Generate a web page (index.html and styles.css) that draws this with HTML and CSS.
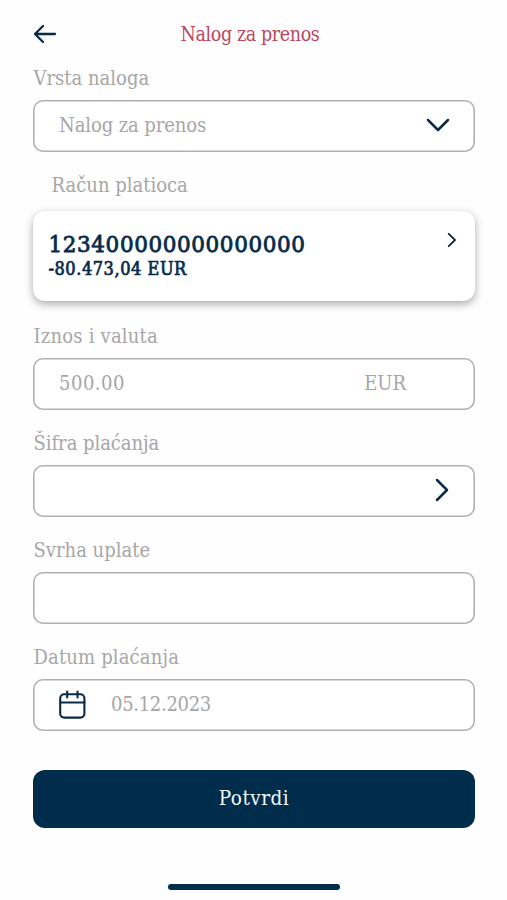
FILE: index.html
```html
<!DOCTYPE html>
<html lang="sr-Latn">
<head>
<meta charset="utf-8">
<meta name="viewport" content="width=device-width, initial-scale=1">
<title>Nalog za prenos</title>
<link rel="stylesheet" href="styles.css">
</head>
<body>
<main class="screen">
  <header class="topbar">
    <svg class="back" width="24" height="20" viewBox="0 0 24 20"><path d="M22 10H2.5M10 2L2 10l8 8"/></svg>
    <h1 class="title">Nalog za prenos</h1>
  </header>

  <form class="form">
    <div class="group">
      <label class="label">Vrsta naloga</label>
      <div class="field">
        <span class="type">Nalog za prenos</span>
        <svg class="chevron-down" width="24" height="14" viewBox="0 0 24 14"><path d="M2 2l10 10L22 2"/></svg>
      </div>
    </div>

    <div class="group group-account">
      <label class="label label-account">Račun platioca</label>
      <div class="account">
        <div class="account-info">
          <div class="number">123400000000000000</div>
          <div class="balance">-80.473,04 EUR</div>
        </div>
        <svg class="chevron-small" width="10" height="16" viewBox="0 0 10 16"><path d="M1.7 1.8L8 8l-6.3 6.2"/></svg>
      </div>
    </div>

    <div class="group">
      <label class="label label-amount">Iznos i valuta</label>
      <div class="field">
        <span class="amount">500.00</span>
        <span class="currency">EUR</span>
      </div>
    </div>

    <div class="group">
      <label class="label label-code">Šifra plaćanja</label>
      <div class="field">
        <svg class="chevron-right" width="14" height="24" viewBox="0 0 14 24"><path d="M2 2l10 10L2 22"/></svg>
      </div>
    </div>

    <div class="group">
      <label class="label">Svrha uplate</label>
      <div class="field"></div>
    </div>

    <div class="group">
      <label class="label label-date">Datum plaćanja</label>
      <div class="field">
        <svg class="calendar" width="28" height="30" viewBox="0 0 28 30"><rect x="2.2" y="4.2" width="24.2" height="23.4" rx="4"/><path d="M2.5 12.5h24M9.2 1.5v6M19.5 1.5v6"/></svg>
        <span class="date">05.12.2023</span>
      </div>
    </div>

    <button class="submit" type="button">Potvrdi</button>
  </form>

  <div class="home-bar"></div>
</main>
</body>
</html>
```
FILE: styles.css
```css
* {
  box-sizing: border-box;
}

body {
  margin: 0;
  background: #fefefe;
  font-family: "DejaVu Serif Condensed", "DejaVu Serif", serif;
  font-stretch: condensed;
  color: #a6a6a6;
}

svg {
  flex: none;
  fill: none;
  stroke: #0b2a45;
  stroke-width: 2.3;
  stroke-linecap: round;
  stroke-linejoin: round;
}

.screen {
  height: 900px;
  padding: 22px 32px 0 33px;
  display: flex;
  flex-direction: column;
}

.topbar {
  height: 44px;
  display: grid;
  grid-template-columns: 24px 1fr 32px;
  align-items: start;
}

.back {
  margin: 1.5px 0 0;
}

.title {
  margin: 1px 0 0;
  text-align: center;
  font-size: 19.5px;
  line-height: 24px;
  font-weight: 400;
  letter-spacing: -0.4px;
  color: #bd4660;
}

.form {
  display: flex;
  flex-direction: column;
  gap: 21px;
}

.group {
  display: flex;
  flex-direction: column;
  gap: 10px;
}

.group-account {
  gap: 14px;
  margin-bottom: 2px;
}

.label {
  padding-left: 0.5px;
  font-size: 20px;
  line-height: 24px;
  white-space: nowrap;
}

.label-account {
  padding-left: 18.5px;
}

.label-amount {
  letter-spacing: 0.2px;
}

.label-code {
  letter-spacing: -0.05px;
}

.label-date {
  letter-spacing: 0.15px;
}

.field {
  height: 52px;
  padding: 1px 26px 3px 26px;
  display: flex;
  align-items: center;
  border-radius: 10px;
  box-shadow: inset 0 0 0 1.6px #b0b0b0;
  font-size: 20px;
  background: #fff;
}

.type {
  letter-spacing: -0.1px;
}

.chevron-down,
.chevron-right {
  margin-left: auto;
  stroke-width: 2.5;
}

.chevron-down {
  margin-right: -1px;
}

.amount {
  letter-spacing: 0.5px;
}

.currency {
  margin-left: auto;
  margin-right: 43px;
}

.calendar {
  stroke-width: 2.1;
  margin-top: 1px;
  margin-left: -1px;
}

.date {
  margin-left: 25px;
  letter-spacing: -0.3px;
}

.account {
  height: 90px;
  padding: 21px 18px 0 15.5px;
  display: flex;
  justify-content: space-between;
  align-items: flex-start;
  border-radius: 12px;
  background: #fff;
  color: #062b49;
  box-shadow: 0 3px 8px rgba(0, 0, 0, 0.34);
}

.number {
  font-family: "DejaVu Serif", serif;
  font-stretch: normal;
  font-size: 21.5px;
  line-height: 25px;
  letter-spacing: 0.6px;
  -webkit-text-stroke: 0.8px #062b49;
}

.balance {
  font-size: 18px;
  line-height: 24px;
  letter-spacing: 0.55px;
  -webkit-text-stroke: 0.7px #062b49;
}

.chevron-small {
  stroke-width: 1.8;
}

.submit {
  height: 58px;
  margin-top: 18px;
  padding: 0 0 2px;
  border: 0;
  border-radius: 12px;
  background: #002d4c;
  color: #f4f9fc;
  font: inherit;
  font-size: 20.5px;
  letter-spacing: 0.5px;
}

.home-bar {
  width: 172px;
  height: 6px;
  margin: 56px auto 0;
  border-radius: 3px;
  background: #002d4c;
}
```
